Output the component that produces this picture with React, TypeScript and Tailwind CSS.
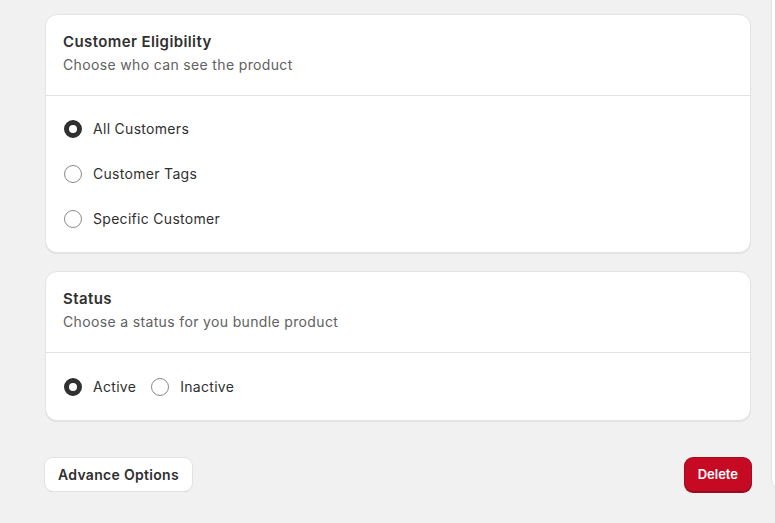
import { useState } from 'react';

type Option = { value: string; label: string };

const eligibilityOptions: Option[] = [
  { value: 'all', label: 'All Customers' },
  { value: 'tags', label: 'Customer Tags' },
  { value: 'specific', label: 'Specific Customer' },
];

const statusOptions: Option[] = [
  { value: 'active', label: 'Active' },
  { value: 'inactive', label: 'Inactive' },
];

function Radio({ checked, label, onSelect }: { checked: boolean; label: string; onSelect: () => void }) {
  return (
    <label className="flex cursor-pointer items-center gap-[11px]" onClick={onSelect}>
      <span
        className={`box-border h-[18px] w-[18px] shrink-0 rounded-full bg-white ${
          checked ? 'border-[5px] border-[#303030]' : 'border border-[#8a8a8a]'
        }`}
      />
      <span className="text-[14px] leading-5 tracking-[0.3px] text-[#303030]">{label}</span>
    </label>
  );
}

function Card({ title, subtitle, children }: { title: string; subtitle: string; children: React.ReactNode }) {
  return (
    <div className="overflow-hidden rounded-[12px] border border-[#e3e3e3] bg-white shadow-[0_1px_0_0_rgba(26,26,26,0.07)]">
      <div className="border-b border-[#e3e3e3] px-[17px] pt-[17px] pb-5">
        <h2 className="text-[15px] font-semibold leading-5 tracking-[0.4px] text-[#303030]">{title}</h2>
        <p className="mt-[3px] text-[14px] leading-5 tracking-[0.35px] text-[#616161]">{subtitle}</p>
      </div>
      {children}
    </div>
  );
}

export default function App() {
  const [eligibility, setEligibility] = useState('all');
  const [status, setStatus] = useState('active');

  return (
    <div
      className="flex h-[523px] w-[775px] gap-5 overflow-hidden bg-[#f1f1f1] pl-[45px]"
      style={{ fontFamily: 'Inter, "Noto Sans", sans-serif' }}
    >
      <div className="flex w-[706px] shrink-0 flex-col pt-[14px]">
        <Card title="Customer Eligibility" subtitle="Choose who can see the product">
          <div className="flex flex-col px-[18px] pt-[10px] pb-[11px]">
            {eligibilityOptions.map((o) => (
              <div key={o.value} className="flex h-[45px] items-center">
                <Radio checked={eligibility === o.value} label={o.label} onSelect={() => setEligibility(o.value)} />
              </div>
            ))}
          </div>
        </Card>

        <div className="mt-[18px]">
          <Card title="Status" subtitle="Choose a status for you bundle product">
            <div className="flex h-[67px] items-center gap-[15px] px-[18px]">
              {statusOptions.map((o) => (
                <Radio key={o.value} checked={status === o.value} label={o.label} onSelect={() => setStatus(o.value)} />
              ))}
            </div>
          </Card>
        </div>

        <div className="mt-[36px] flex items-center justify-between">
          <button className="h-[33px] rounded-[8px] bg-white px-[13px] text-[14px] font-semibold tracking-[0.3px] text-[#303030] shadow-[0_0_0_1px_#e3e3e3,0_1px_0_0_#b5b5b5]">
            Advance Options
          </button>
          <button className="mt-px h-[34px] rounded-[8px] bg-[#c70a24] px-[13px] text-[13px] font-semibold text-white shadow-[inset_0_-1px_0_0_#8e0b21,0_0_0_1px_#a30b1e]">
            Delete
          </button>
        </div>
      </div>

      <div className="-mt-4 mb-[32px] w-[300px] shrink-0 rounded-[12px] border border-[#e3e3e3] bg-white" />
    </div>
  );
}
